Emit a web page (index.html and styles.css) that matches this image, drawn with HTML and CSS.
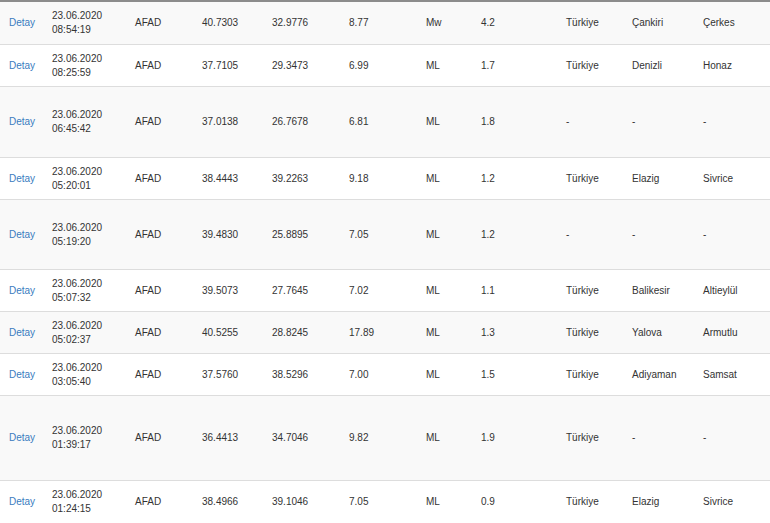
FILE: index.html
```html
<!DOCTYPE html>
<html>
<head>
<meta charset="utf-8">
<link rel="stylesheet" href="styles.css">
</head>
<body>
<table class="quakes">
  <colgroup>
    <col class="c-link"><col class="c-date"><col class="c-src"><col class="c-lat"><col class="c-lon"><col class="c-depth"><col class="c-type"><col class="c-mag"><col class="c-country"><col class="c-city"><col class="c-district">
  </colgroup>
  <tbody>
    <tr class="row odd"><td class="first"><a href="#">Detay</a></td><td>23.06.2020<br>08:54:19</td><td>AFAD</td><td>40.7303</td><td>32.9776</td><td>8.77</td><td>Mw</td><td>4.2</td><td>Türkiye</td><td>Çankiri</td><td>Çerkes</td></tr>
    <tr class="row"><td class="first"><a href="#">Detay</a></td><td>23.06.2020<br>08:25:59</td><td>AFAD</td><td>37.7105</td><td>29.3473</td><td>6.99</td><td>ML</td><td>1.7</td><td>Türkiye</td><td>Denizli</td><td>Honaz</td></tr>
    <tr class="row odd tall-a"><td class="first"><a href="#">Detay</a></td><td>23.06.2020<br>06:45:42</td><td>AFAD</td><td>37.0138</td><td>26.7678</td><td>6.81</td><td>ML</td><td>1.8</td><td>-</td><td>-</td><td>-</td></tr>
    <tr class="row"><td class="first"><a href="#">Detay</a></td><td>23.06.2020<br>05:20:01</td><td>AFAD</td><td>38.4443</td><td>39.2263</td><td>9.18</td><td>ML</td><td>1.2</td><td>Türkiye</td><td>Elazig</td><td>Sivrice</td></tr>
    <tr class="row odd tall-b"><td class="first"><a href="#">Detay</a></td><td>23.06.2020<br>05:19:20</td><td>AFAD</td><td>39.4830</td><td>25.8895</td><td>7.05</td><td>ML</td><td>1.2</td><td>-</td><td>-</td><td>-</td></tr>
    <tr class="row"><td class="first"><a href="#">Detay</a></td><td>23.06.2020<br>05:07:32</td><td>AFAD</td><td>39.5073</td><td>27.7645</td><td>7.02</td><td>ML</td><td>1.1</td><td>Türkiye</td><td>Balikesir</td><td>Altieylül</td></tr>
    <tr class="row odd"><td class="first"><a href="#">Detay</a></td><td>23.06.2020<br>05:02:37</td><td>AFAD</td><td>40.5255</td><td>28.8245</td><td>17.89</td><td>ML</td><td>1.3</td><td>Türkiye</td><td>Yalova</td><td>Armutlu</td></tr>
    <tr class="row"><td class="first"><a href="#">Detay</a></td><td>23.06.2020<br>03:05:40</td><td>AFAD</td><td>37.5760</td><td>38.5296</td><td>7.00</td><td>ML</td><td>1.5</td><td>Türkiye</td><td>Adiyaman</td><td>Samsat</td></tr>
    <tr class="row odd tall-c"><td class="first"><a href="#">Detay</a></td><td>23.06.2020<br>01:39:17</td><td>AFAD</td><td>36.4413</td><td>34.7046</td><td>9.82</td><td>ML</td><td>1.9</td><td>Türkiye</td><td>-</td><td>-</td></tr>
    <tr class="row"><td class="first"><a href="#">Detay</a></td><td>23.06.2020<br>01:24:15</td><td>AFAD</td><td>38.4966</td><td>39.1046</td><td>7.05</td><td>ML</td><td>0.9</td><td>Türkiye</td><td>Elazig</td><td>Sivrice</td></tr>
  </tbody>
</table>
</body>
</html>
```

FILE: styles.css
```css
html, body {
  margin: 0;
  padding: 0;
  background: #ffffff;
}

body {
  font-family: "Liberation Sans", Arial, sans-serif;
  font-size: 10px;
  line-height: 14px;
  color: #333333;
  overflow: hidden;
}

.quakes {
  width: 770px;
  table-layout: fixed;
  border-collapse: separate;
  border-spacing: 0;
  border-top: 2px solid #8c8c8c;
}

.c-link { width: 52px; }
.c-date { width: 83px; }
.c-src { width: 67px; }
.c-lat { width: 70px; }
.c-lon { width: 77px; }
.c-depth { width: 77px; }
.c-type { width: 55px; }
.c-mag { width: 85px; }
.c-country { width: 66px; }
.c-city { width: 71px; }
.c-district { width: 67px; }

.row {
  height: 42px;
  background: #ffffff;
}

.row.odd {
  background: #f9f9f9;
}

.row.tall-a { height: 71px; }
.row.tall-b { height: 70px; }
.row.tall-c { height: 85px; }

.row td {
  padding: 6px 0;
  vertical-align: middle;
  border-top: 1px solid #dddddd;
  white-space: nowrap;
}

.row:first-child td {
  border-top: none;
}

.row td.first {
  padding-left: 9px;
}

.row a {
  color: #3a7cc0;
  text-decoration: none;
}
```
